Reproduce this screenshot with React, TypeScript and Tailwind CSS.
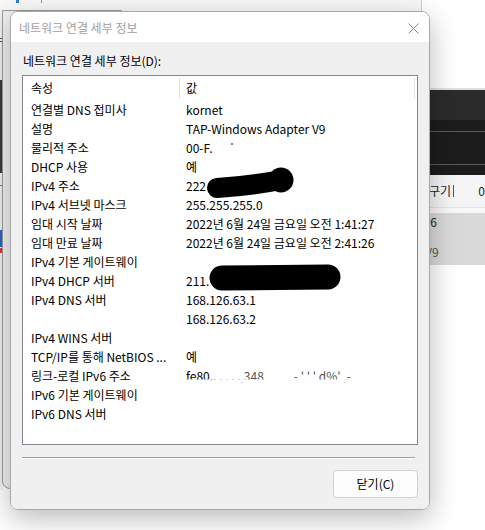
import React from "react";

const rows: [string, string][] = [
  ["연결별 DNS 접미사", "kornet"],
  ["설명", "TAP-Windows Adapter V9"],
  ["물리적 주소", "00-F."],
  ["DHCP 사용", "예"],
  ["IPv4 주소", "222"],
  ["IPv4 서브넷 마스크", "255.255.255.0"],
  ["임대 시작 날짜", "2022년 6월 24일 금요일 오전 1:41:27"],
  ["임대 만료 날짜", "2022년 6월 24일 금요일 오전 2:41:26"],
  ["IPv4 기본 게이트웨이", ""],
  ["IPv4 DHCP 서버", "211."],
  ["IPv4 DNS 서버", "168.126.63.1"],
  ["", "168.126.63.2"],
  ["IPv4 WINS 서버", ""],
  ["TCP/IP를 통해 NetBIOS ...", "예"],
  ["링크-로컬 IPv6 주소", "FE80"],
  ["IPv6 기본 게이트웨이", ""],
  ["IPv6 DNS 서버", ""],
];

export default function App() {
  return (
    <div className="relative w-[485px] h-[530px] overflow-hidden bg-white font-['Noto_Sans_CJK_KR',sans-serif] text-[12px] text-black">
      {/* top background window */}
      <div className="absolute left-0 top-0 w-[422px] h-[40px] bg-[#f8f8f8] border-r border-[#cfcfcf]">
        <div className="absolute left-[16px] top-0 w-[3px] h-[3px] bg-[#2a7fd4]" />
        <div className="absolute left-[41px] top-0 w-[1px] h-[3px] bg-[#999]" />
      </div>

      {/* left strip behind */}
      <div className="absolute left-0 top-[10px] w-[3px] h-[480px] bg-[#f0f0f0]">
        <div className="absolute left-0 top-[28px] w-[2px] h-[1px] bg-[#555]" />
        <div className="absolute left-0 top-[31px] w-[2px] h-[1px] bg-[#555]" />
        <div className="absolute left-0 top-[70px] w-[3px] h-[93px] bg-[#3a3a3a]" />
        <div className="absolute left-0 top-[175px] w-[2px] h-[1px] bg-[#777]" />
        <div className="absolute left-0 top-[220px] w-[3px] h-[17px] bg-[#2563c9]" />
        <div className="absolute left-0 top-[238px] w-[3px] h-[5px] bg-[#d33]" />
      </div>
      {/* left background window */}
      <div className="absolute left-[2px] top-[10px] w-[120px] h-[479px] rounded-bl-[8px] border border-[#9a9a9a] bg-[#f0f0f0]" />

      {/* right background window */}
      <div className="absolute left-[400px] top-[88px] w-[85px] h-[190px] flex flex-col overflow-hidden">
        <div className="h-[2px] bg-[#e0e0e0]" />
        <div className="h-[30px] bg-[#2b2b2b]" />
        <div className="h-[11px] bg-[#1c1c1c]" />
        <div className="h-[1px] bg-[#5a5a5a]" />
        <div className="h-[32px] bg-[#1c1c1c]" />
        <div className="h-[1px] bg-[#5a5a5a]" />
        <div className="h-[10px] bg-[#1c1c1c]" />
        <div className="h-[32px] bg-[#f5f5f5] flex items-center text-[12px] text-[#222] whitespace-nowrap">
          <span className="ml-[18px]">보구기</span>
          <span className="ml-[2px] w-[1px] h-[12px] bg-[#555]" />
          <span className="ml-[25px]">0</span>
        </div>
        <div className="h-[1px] bg-[#e2e2e2]" />
        <div className="h-[5px] bg-[#f8f8f8]" />
        <div className="h-[52px] bg-[#d9d9d9] flex flex-col text-[12px] text-[#222] whitespace-nowrap">
          <span className="ml-[24px] mt-[1px] leading-[16px]">v6</span>
          <span className="ml-[25px] mt-[14px] leading-[16px] text-[#555]">V9</span>
        </div>
      </div>

      {/* dialog */}
      <div className="absolute left-[10px] top-[11px] w-[420px] h-[499px] rounded-[8px] border border-[#a8a8a8] overflow-hidden shadow-[0_8px_28px_rgba(0,0,0,0.28)] flex flex-col">
        <div className="h-[30px] bg-white flex items-center justify-between pl-[8px] pr-[10px]">
          <span className="text-[#a0a0a0] leading-[16px] mt-[2px]">네트워크 연결 세부 정보</span>
          <svg width="11" height="11" viewBox="0 0 11 11" className="mt-[2px]">
            <path d="M0.5 0.5 L10.5 10.5 M10.5 0.5 L0.5 10.5" stroke="#8a8a8a" strokeWidth="1" />
          </svg>
        </div>
        <div className="flex-1 bg-[#f0f0f0] flex flex-col px-[11px] pt-[11px]">
          <div className="h-[16px] leading-[16px] ml-[1px]">네트워크 연결 세부 정보(D):</div>
          <div className="mt-[6px] h-[370px] border border-[#828790] bg-white flex flex-col">
            <div className="h-[24px] flex items-center">
              <div className="w-[156px] pl-[8px] leading-[16px]">속성</div>
              <div className="w-[1px] h-[22px] bg-[#e5e5e5]" />
              <div className="flex-1 pl-[6px] leading-[16px]">값</div>
              <div className="w-[1px] h-[22px] bg-[#e5e5e5] mr-[2px]" />
            </div>
            {rows.map(([k, v], i) => (
              <div key={i} className="h-[19px] flex items-center">
                <div className="w-[157px] pl-[8px] whitespace-nowrap overflow-hidden leading-[16px]">{k}</div>
                <div className="flex-1 pl-[6px] whitespace-nowrap leading-[16px]">
                  {v === "FE80" ? (
                    <span>
                      fe80.. <span className="text-[#555]">. . . .,348</span>
                      <span className="ml-[30px] text-[#555]">-  '  '  ' d%'  ,-</span>
                    </span>
                  ) : (
                    v
                  )}
                </div>
              </div>
            ))}
          </div>
          <div className="mt-[12px] w-[393px] h-[2px] border-t border-[#a0a0a0] border-b border-b-white" />
          <div className="mt-[11px] flex justify-end">
            <button className="w-[85px] h-[28px] rounded-[4px] border border-[#d0d0d0] bg-[#fdfdfd] text-[12px] leading-[16px] text-black">
              닫기(C)
            </button>
          </div>
        </div>
      </div>

      {/* redactions and erasures over the list */}
      <svg className="absolute left-0 top-0 pointer-events-none" width="485" height="530">
        <rect x="184" y="379.5" width="220" height="3" fill="white" />
        <circle cx="232" cy="144" r="0.9" fill="#444" />
        <path d="M217 188 Q250 186 281 180" stroke="black" strokeWidth="20" strokeLinecap="round" fill="none" />
        <circle cx="281" cy="180" r="12.5" fill="black" />
        <path d="M222 278 L328 277" stroke="black" strokeWidth="25" strokeLinecap="round" fill="none" />
      </svg>
    </div>
  );
}
